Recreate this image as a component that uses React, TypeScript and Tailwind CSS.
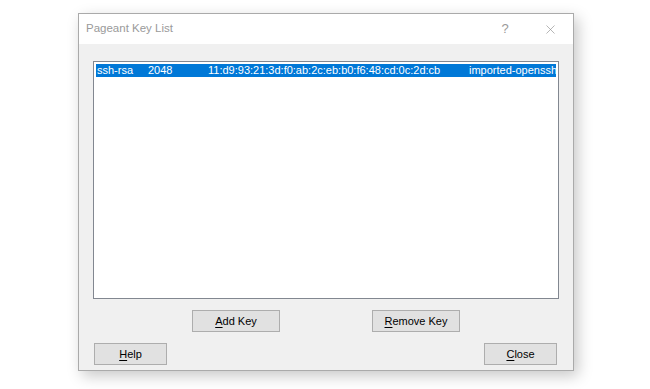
import { X } from "lucide-react";

type KeyRow = {
  type: string;
  bits: string;
  fingerprint: string;
  comment: string;
};

const keys: KeyRow[] = [
  {
    type: "ssh-rsa",
    bits: "2048",
    fingerprint: "11:d9:93:21:3d:f0:ab:2c:eb:b0:f6:48:cd:0c:2d:cb",
    comment: "imported-openssh-key",
  },
];

function DlgButton({
  label,
  hot,
  width,
}: {
  label: string;
  hot: number;
  width: string;
}) {
  return (
    <button
      className={`${width} block h-[22px] bg-[#e1e1e1] border border-[#adadad] text-[11px] text-black leading-none`}
    >
      {label.slice(0, hot)}
      <span className="underline underline-offset-2">{label[hot]}</span>
      {label.slice(hot + 1)}
    </button>
  );
}

export default function App() {
  return (
    <div
      className="w-[650px] h-[389px] bg-white pt-[13px] pl-[78px]"
      style={{ fontFamily: '"Liberation Sans", Arial, sans-serif' }}
    >
      <div className="w-[496px] h-[358px] border border-[#aaaaaa] bg-[#f0f0f0] flex flex-col shadow-[4px_5px_14px_rgba(0,0,0,0.22)]">
        {/* TITLE BAR */}
        <div className="h-[30px] bg-white flex items-center shrink-0">
          <span className="pl-[7px] text-[11.5px] text-[#9a9a9a] flex-1">
            Pageant Key List
          </span>
          <span className="w-[46px] text-center text-[13px] text-[#9a9a9a] pl-[2px]">
            ?
          </span>
          <span className="w-[46px] flex justify-center">
            <X size={15} strokeWidth={1} color="#8a8a8a" />
          </span>
        </div>

        {/* CLIENT */}
        <div className="flex-1 flex flex-col px-[14px] pt-[17px]">
          <div className="w-[466px] h-[238px] border border-[#828790] bg-white p-[2px] overflow-hidden">
            {keys.map((k) => (
              <div
                key={k.fingerprint}
                className="h-[13px] bg-[#0078d7] text-white text-[11px] leading-[13px] flex whitespace-nowrap overflow-hidden"
              >
                <span className="w-[52px] pl-[1px] shrink-0">{k.type}</span>
                <span className="w-[60px] shrink-0">{k.bits}</span>
                <span className="w-[261px] shrink-0">{k.fingerprint}</span>
                <span className="shrink-0">{k.comment}</span>
              </div>
            ))}
          </div>

          <div className="flex mt-[11px]">
            <div className="ml-[99px]">
              <DlgButton label="Add Key" hot={0} width="w-[88px]" />
            </div>
            <div className="ml-[92px]">
              <DlgButton label="Remove Key" hot={0} width="w-[88px]" />
            </div>
          </div>

          <div className="flex justify-between mt-[11px] pl-[1px] pr-[2px]">
            <DlgButton label="Help" hot={0} width="w-[73px]" />
            <DlgButton label="Close" hot={0} width="w-[73px]" />
          </div>
        </div>
      </div>
    </div>
  );
}
